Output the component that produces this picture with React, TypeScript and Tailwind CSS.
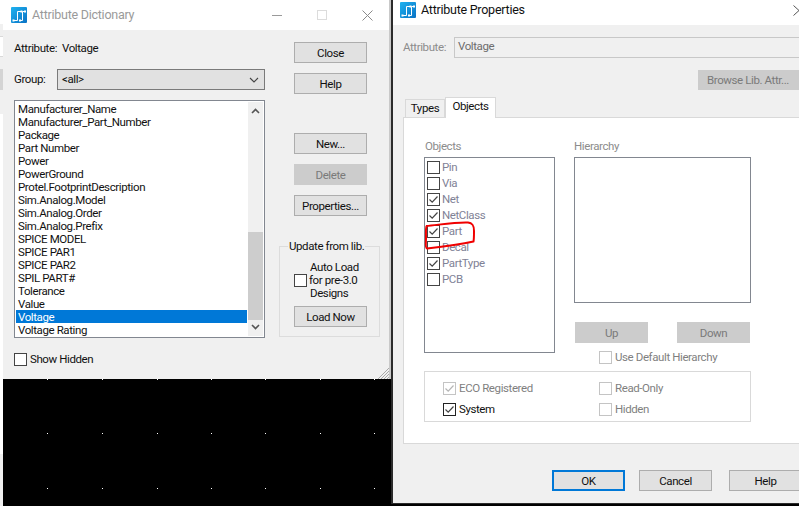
import type { ReactNode } from 'react'

const attributes = [
  'Manufacturer_Name',
  'Manufacturer_Part_Number',
  'Package',
  'Part Number',
  'Power',
  'PowerGround',
  'Protel.FootprintDescription',
  'Sim.Analog.Model',
  'Sim.Analog.Order',
  'Sim.Analog.Prefix',
  'SPICE MODEL',
  'SPICE PAR1',
  'SPICE PAR2',
  'SPIL PART#',
  'Tolerance',
  'Value',
  'Voltage',
  'Voltage Rating',
]

const objects = [
  { name: 'Pin', checked: false },
  { name: 'Via', checked: false },
  { name: 'Net', checked: true },
  { name: 'NetClass', checked: true },
  { name: 'Part', checked: true },
  { name: 'Decal', checked: false },
  { name: 'PartType', checked: true },
  { name: 'PCB', checked: false },
]

function AppIcon() {
  return (
    <svg width="16" height="16" viewBox="0 0 16 16" className="shrink-0">
      <defs>
        <linearGradient id="appicon" x1="0" y1="0" x2="1" y2="1">
          <stop offset="0" stopColor="#1eb2f0" />
          <stop offset="1" stopColor="#0a72c4" />
        </linearGradient>
      </defs>
      <rect width="16" height="16" rx="1" fill="url(#appicon)" />
      <path d="M2 13.500h4.500V4.500H10M8.500 13.500h3V4.500h3" fill="none" stroke="#fff" strokeWidth="1" />
      <rect x="1.500" y="12.500" width="2" height="2" fill="#fff" />
      <rect x="9.500" y="3.500" width="2" height="2" fill="#fff" />
      <rect x="8" y="12.500" width="2" height="2" fill="#fff" />
      <rect x="13" y="3.500" width="2" height="2" fill="#fff" />
    </svg>
  )
}

function Check({ checked, muted, dark }: { checked?: boolean; muted?: boolean; dark?: boolean }) {
  return (
    <span
      className={`flex h-[13px] w-[13px] shrink-0 items-center justify-center border bg-white ${
        muted ? 'border-[#c4c4c4]' : dark ? 'border-[#222]' : 'border-[#444]'
      }`}
    >
      {checked && (
        <svg width="11" height="11" viewBox="0 0 11 11">
          <path
            d="M1.500 5.500 4.200 8.200 9.500 2.500"
            fill="none"
            stroke={muted ? '#b5b5b5' : '#444'}
            strokeWidth="1.2"
          />
        </svg>
      )}
    </span>
  )
}

function Btn({ children, disabled, className = '' }: { children: ReactNode; disabled?: boolean; className?: string }) {
  return (
    <div
      className={`flex h-[21px] w-[73px] shrink-0 items-center justify-center border pt-[2px] text-[11.5px] ${
        disabled
          ? 'border-[#cccccc] bg-[#cccccc] text-[#7a7a7a]'
          : 'border-[#adadad] bg-[#e1e1e1] text-[#111]'
      } ${className}`}
    >
      {children}
    </div>
  )
}

function AttributeDictionary() {
  return (
    <div className="absolute left-[3px] top-0 flex h-[379px] w-[388px] flex-col border-r-[2px] border-[#c9c9c9] bg-[#f0f0f0]">
      <div className="flex h-[30px] shrink-0 items-center bg-white pl-[8px]">
        <AppIcon />
        <span className="ml-[5px] text-[12.500px] tracking-[-0.25px] text-[#9a9a9a]">Attribute Dictionary</span>
        <div className="ml-auto flex items-center pr-[16px]">
          <div className="h-px w-[10px] bg-[#9a9a9a]" />
          <div className="ml-[35px] h-[10px] w-[10px] border border-[#dcdcdc]" />
          <svg width="11" height="11" viewBox="0 0 11 11" className="ml-[35px]">
            <path d="M.5.5l10 10M10.500.5l-10 10" stroke="#8a8a8a" fill="none" />
          </svg>
        </div>
      </div>

      <div className="relative flex flex-1">
        <div className="ml-[11px] w-[251px] shrink-0 pt-[12px]">
          <div className="flex h-[13px] items-center text-[11.5px] text-[#111]">
            <span className="w-[48px]">Attribute:</span>
            <span>Voltage</span>
          </div>
          <div className="mt-[14px] flex h-[21px] items-center text-[11.5px] text-[#111]">
            <span className="w-[43px] shrink-0">Group:</span>
            <div className="flex h-[21px] flex-1 items-center justify-between border border-[#7a7a7a] bg-[#e1e1e1] pl-[4px] pr-[5px]">
              <span>&lt;all&gt;</span>
              <svg width="10" height="6" viewBox="0 0 10 6">
                <path d="M1 1l4 4 4-4" fill="none" stroke="#444" strokeWidth="1.1" />
              </svg>
            </div>
          </div>
          <div className="mt-[10px] flex h-[238px] border border-[#828790] bg-white pl-[1px] pt-[1px] text-[11.5px] leading-[13px] text-[#111]">
            <div className="flex-1">
              {attributes.map((name) => (
                <div
                  key={name}
                  className={`h-[13px] whitespace-nowrap pl-[2px] pt-px ${name === 'Voltage' ? 'bg-[#0078d7] text-white' : ''}`}
                >
                  {name}
                </div>
              ))}
            </div>
            <div className="relative mx-px mb-[1px] flex w-[15px] shrink-0 flex-col items-center justify-between bg-[#f0f0f0] py-[6px]">
              <svg width="9" height="6" viewBox="0 0 9 6">
                <path d="M1 5l3.500-3.500L8 5" fill="none" stroke="#555" strokeWidth="1.6" />
              </svg>
              <div className="absolute inset-x-0 top-[130px] h-[88px] bg-[#cdcdcd]" />
              <svg width="9" height="6" viewBox="0 0 9 6">
                <path d="M1 1l3.500 3.500L8 1" fill="none" stroke="#555" strokeWidth="1.6" />
              </svg>
            </div>
          </div>
          <div className="mt-[15px] flex h-[13px] items-center gap-[3px] text-[11.5px] text-[#111]">
            <Check />
            <span>Show Hidden</span>
          </div>
        </div>

        <div className="ml-[29px] w-[73px] shrink-0 pt-[12px]">
          <Btn>Close</Btn>
          <Btn className="mt-[10px]">Help</Btn>
          <Btn className="mt-[39px]">New...</Btn>
          <Btn disabled className="mt-[10px]">Delete</Btn>
          <Btn className="mt-[10px]">Properties...</Btn>
          <div className="relative -ml-[15px] mt-[30px] h-[91px] w-[101px] border border-[#dcdcdc] pl-[14px] pt-[14px]">
            <span className="absolute left-[8px] -top-[7px] whitespace-nowrap bg-[#f0f0f0] px-px text-[11.5px] leading-[13px] text-[#111]">
              Update from lib.
            </span>
            <div className="flex items-center text-[11.5px] leading-[13px] text-[#111]">
              <Check />
              <div className="ml-[2px] whitespace-nowrap">
                <div className="pl-px">Auto Load</div>
                <div>for pre-3.0</div>
                <div className="pl-px">Designs</div>
              </div>
            </div>
            <Btn className="mt-[6px]">Load Now</Btn>
          </div>
        </div>

        <svg width="12" height="12" viewBox="0 0 12 12" className="absolute bottom-0 right-0">
          <path d="M1 12 12 1M4 12l8-8M7 12l5-5M10 12l2-2" stroke="#a8a8a8" strokeWidth="1" fill="none" />
        </svg>
      </div>
    </div>
  )
}

function AttributeProperties() {
  return (
    <div className="absolute left-[391px] top-0 h-[504px] w-[408px] overflow-hidden border-b border-l-[2px] border-[#2b2b2b] bg-[#f0f0f0]">
      <div className="flex h-[25px] items-center bg-white pb-[6px] pl-[7px] pt-[1px]">
        <AppIcon />
        <span className="ml-[5px] text-[12.500px] tracking-[-0.25px] text-[#111]">Attribute Properties</span>
        <svg width="6" height="11" viewBox="0 0 6 11" className="ml-auto">
          <path d="M.5.5l5.500 5M.5 10.500l5.500-5" stroke="#555" fill="none" />
        </svg>
      </div>

      <div className="ml-[10px] mt-[12px] flex h-[21px] w-[420px] items-center pt-px text-[11.5px]">
        <span className="w-[51px] text-[#8c8c8c]">Attribute:</span>
        <div className="-mt-px flex h-[21px] flex-1 items-center border border-[#c8c8c8] pb-[1px] pl-[3px] text-[#6d6d6d]">Voltage</div>
      </div>
      <Btn disabled className="ml-[305px] mt-[12px] !h-[20px] !w-[110px] !justify-start pl-[8px]">
        Browse Lib. Attr...
      </Btn>

      <div className="ml-[12px] mt-[7px] flex h-[20px] items-end text-[11.5px] text-[#111]">
        <div className="flex h-[18px] w-[40px] items-center justify-center border border-b-0 border-[#d9d9d9] bg-[#f0f0f0] pt-px">Types</div>
        <div className="relative z-10 -mb-px flex h-[21px] w-[51px] items-center justify-center border border-b-0 border-[#d9d9d9] bg-white pb-[3px]">Objects</div>
      </div>

      <div className="ml-[10px] h-[327px] w-[420px] border border-[#d9d9d9] bg-white pl-[20px] pt-[21px] text-[11.5px]">
        <div className="flex">
          <div className="w-[131px] shrink-0">
            <div className="h-[13px] pl-px pt-px leading-[13px] text-[#8c8c8c]">Objects</div>
            <div className="mt-[5px] h-[196px] border border-[#828790] pl-[2px] pt-[3px]">
              {objects.map((o) => (
                <div key={o.name} className="mb-[3px] flex h-[13px] items-center gap-[2px] text-[#7f8296]">
                  <Check checked={o.checked} />
                  <span>{o.name}</span>
                </div>
              ))}
            </div>
          </div>
          <div className="ml-[19px] w-[177px] shrink-0">
            <div className="h-[13px] pt-px leading-[13px] text-[#8c8c8c]">Hierarchy</div>
            <div className="mt-[5px] h-[146px] border border-[#828790]" />
            <div className="mt-[19px] flex gap-[29px] pl-px">
              <Btn disabled>Up</Btn>
              <Btn disabled>Down</Btn>
            </div>
            <div className="mt-[8px] flex h-[13px] items-center gap-[3px] pl-[25px] text-[#7f7f7f]">
              <Check muted />
              <span>Use Default Hierarchy</span>
            </div>
          </div>
        </div>
        <div className="mt-[7px] grid h-[51px] w-[327px] grid-cols-[156px_1fr] content-start gap-y-[8px] border border-[#d9d9d9] pl-[18px] pt-[10px]">
          <div className="flex h-[13px] items-center gap-[3px] text-[#7f7f7f]">
            <Check checked muted />
            <span>ECO Registered</span>
          </div>
          <div className="flex h-[13px] items-center gap-[3px] text-[#7f7f7f]">
            <Check muted />
            <span>Read-Only</span>
          </div>
          <div className="flex h-[13px] items-center gap-[3px] text-[#111]">
            <Check checked dark />
            <span>System</span>
          </div>
          <div className="flex h-[13px] items-center gap-[3px] text-[#7f7f7f]">
            <Check muted />
            <span>Hidden</span>
          </div>
        </div>
      </div>

      <div className="ml-[159px] mt-[26px] flex">
        <Btn className="border-2 !border-[#0078d7]">OK</Btn>
        <Btn className="ml-[14px]">Cancel</Btn>
        <Btn className="ml-[17px]">Help</Btn>
      </div>
    </div>
  )
}

export default function App() {
  const dotX = [47, 102, 157, 211, 265, 320, 374]
  const dotY = [379, 433, 488]

  return (
    <div
      className="relative h-[506px] w-[799px] overflow-hidden bg-black tracking-[-0.4px]"
      style={{ fontFamily: 'Roboto, "Liberation Sans", Arial, sans-serif' }}
    >
      {/* sliver of the window behind, on the left edge */}
      <div className="absolute left-0 top-0 flex h-full w-[3px] flex-col bg-[#f0f0f0]">
        <div className="h-[24px] bg-white" />
        <div className="mt-[12px] h-[21px] border-y border-[#d9d9d9] bg-white" />
        <div className="mt-[12px] h-[21px] bg-[#d4d4d4]" />
        <div className="mt-[24px] h-[340px] bg-white" />
      </div>

      {/* schematic canvas behind the dialogs */}
      <svg width="799" height="506" className="absolute left-0 top-0">
        {dotX.flatMap((x) =>
          dotY.map((y) => <rect key={`${x}-${y}`} x={x} y={y} width="1" height="1" fill="#fff" />),
        )}
      </svg>

      <AttributeDictionary />
      <AttributeProperties />

      {/* red marker scribbled around the Part row */}
      <svg width="799" height="506" className="pointer-events-none absolute left-0 top-0 z-20">
        <path
          d="M426 226C438 225 455 222 468 222.500C473 223 474 226 474 231C474 235 474 239 473.500 241.500C462 244 440 247 427 248.500C425 248 426 243 426 238C426 233 425.500 230 426.500 226"
          fill="none"
          stroke="#f00000"
          strokeWidth="2"
        />
      </svg>
    </div>
  )
}
